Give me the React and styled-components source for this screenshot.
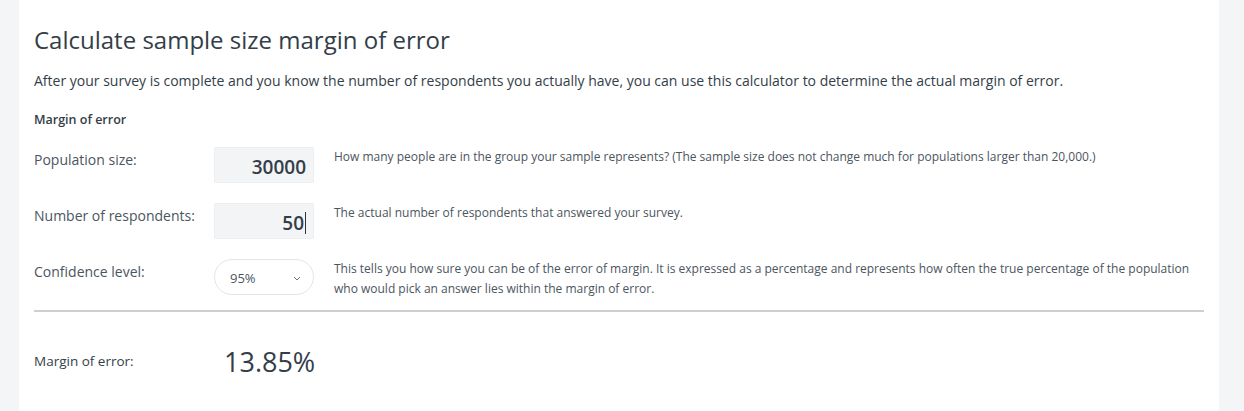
import React from "react"
import styled, { createGlobalStyle } from "styled-components"

const GlobalStyle = createGlobalStyle`
  html, body {
    margin: 0;
    padding: 0;
    background: #f4f5f7;
    font-family: "Open Sans", "Liberation Sans", sans-serif;
    color: #333e48;
  }
`

const Page = styled.div`
  display: flex;
  justify-content: flex-start;
  padding-left: 19px;
  min-height: 411px;
`

const Card = styled.section`
  width: 1200px;
  background: #fff;
  box-sizing: border-box;
  padding: 24px 15px 30px 15px;
`

const Title = styled.h1`
  margin: 0;
  font-size: 24px;
  font-weight: 400;
  line-height: 32px;
  color: #333e48;
`

const Lead = styled.p`
  margin: 15px 0 0 0;
  font-size: 14px;
  line-height: 20px;
  color: #333e48;
`

const SectionLabel = styled.h3`
  margin: 19px 0 0 0;
  font-size: 12.5px;
  font-weight: 600;
  line-height: 20px;
`

const Rows = styled.div`
  display: flex;
  flex-direction: column;
  gap: 20px;
  margin-top: 17px;
  padding-bottom: 11px;
  border-bottom: 2px solid #cfcfcf;
`

const Row = styled.div`
  display: grid;
  grid-template-columns: 160px 100px 1fr;
  column-gap: 20px;
  align-items: start;
`

const Label = styled.label`
  font-size: 14px;
  line-height: 20px;
  color: #4b5560;
  padding-top: 3px;
  white-space: nowrap;
`

const NumberBox = styled.div`
  height: 36px;
  box-sizing: border-box;
  background: #f3f4f6;
  border: 1px solid #eceef0;
  border-radius: 2px;
  display: flex;
  align-items: center;
  justify-content: flex-end;
  padding: 4px 7px 0 0;
  font-size: 19px;
  font-weight: 600;
  color: #333e48;
`

const Caret = styled.span`
  display: inline-block;
  width: 1px;
  height: 22px;
  background: #333;
  margin-left: 1px;
`

const Select = styled.div`
  height: 36px;
  box-sizing: border-box;
  border: 1px solid #e3e5e8;
  border-radius: 18px;
  background: #fff;
  display: flex;
  align-items: center;
  justify-content: space-between;
  padding: 2px 12px 0 15px;
  font-size: 13px;
  color: #4b5560;
`

const Help = styled.p`
  margin: 0;
  font-size: 12px;
  line-height: 20px;
  color: #4b5560;
`

const Result = styled.div`
  display: grid;
  grid-template-columns: 190px 1fr;
  align-items: center;
  margin-top: 31px;
`

const ResultLabel = styled.span`
  font-size: 13.5px;
  color: #333e48;
  padding-bottom: 2px;
`

const ResultValue = styled.span`
  font-size: 27px;
  color: #333e48;
`

const Chevron = () => (
  <svg width="8" height="5" viewBox="0 0 8 5" fill="none">
    <path d="M1 1l3 3 3-3" stroke="#6b7580" strokeWidth="1" />
  </svg>
)

export default function App() {
  return (
    <>
      <GlobalStyle />
      <Page>
        <Card>
          <Title>Calculate sample size margin of error</Title>
          <Lead>
            After your survey is complete and you know the number of respondents you actually have, you can use this calculator to determine the actual margin of error.
          </Lead>
          <SectionLabel>Margin of error</SectionLabel>
          <Rows>
            <Row>
              <Label>Population size:</Label>
              <NumberBox>30000</NumberBox>
              <Help>How many people are in the group your sample represents? (The sample size does not change much for populations larger than 20,000.)</Help>
            </Row>
            <Row>
              <Label>Number of respondents:</Label>
              <NumberBox>50<Caret /></NumberBox>
              <Help>The actual number of respondents that answered your survey.</Help>
            </Row>
            <Row>
              <Label>Confidence level:</Label>
              <Select>95%<Chevron /></Select>
              <Help>This tells you how sure you can be of the error of margin. It is expressed as a percentage and represents how often the true percentage of the population who would pick an answer lies within the margin of error.</Help>
            </Row>
          </Rows>
          <Result>
            <ResultLabel>Margin of error:</ResultLabel>
            <ResultValue>13.85%</ResultValue>
          </Result>
        </Card>
      </Page>
    </>
  )
}
